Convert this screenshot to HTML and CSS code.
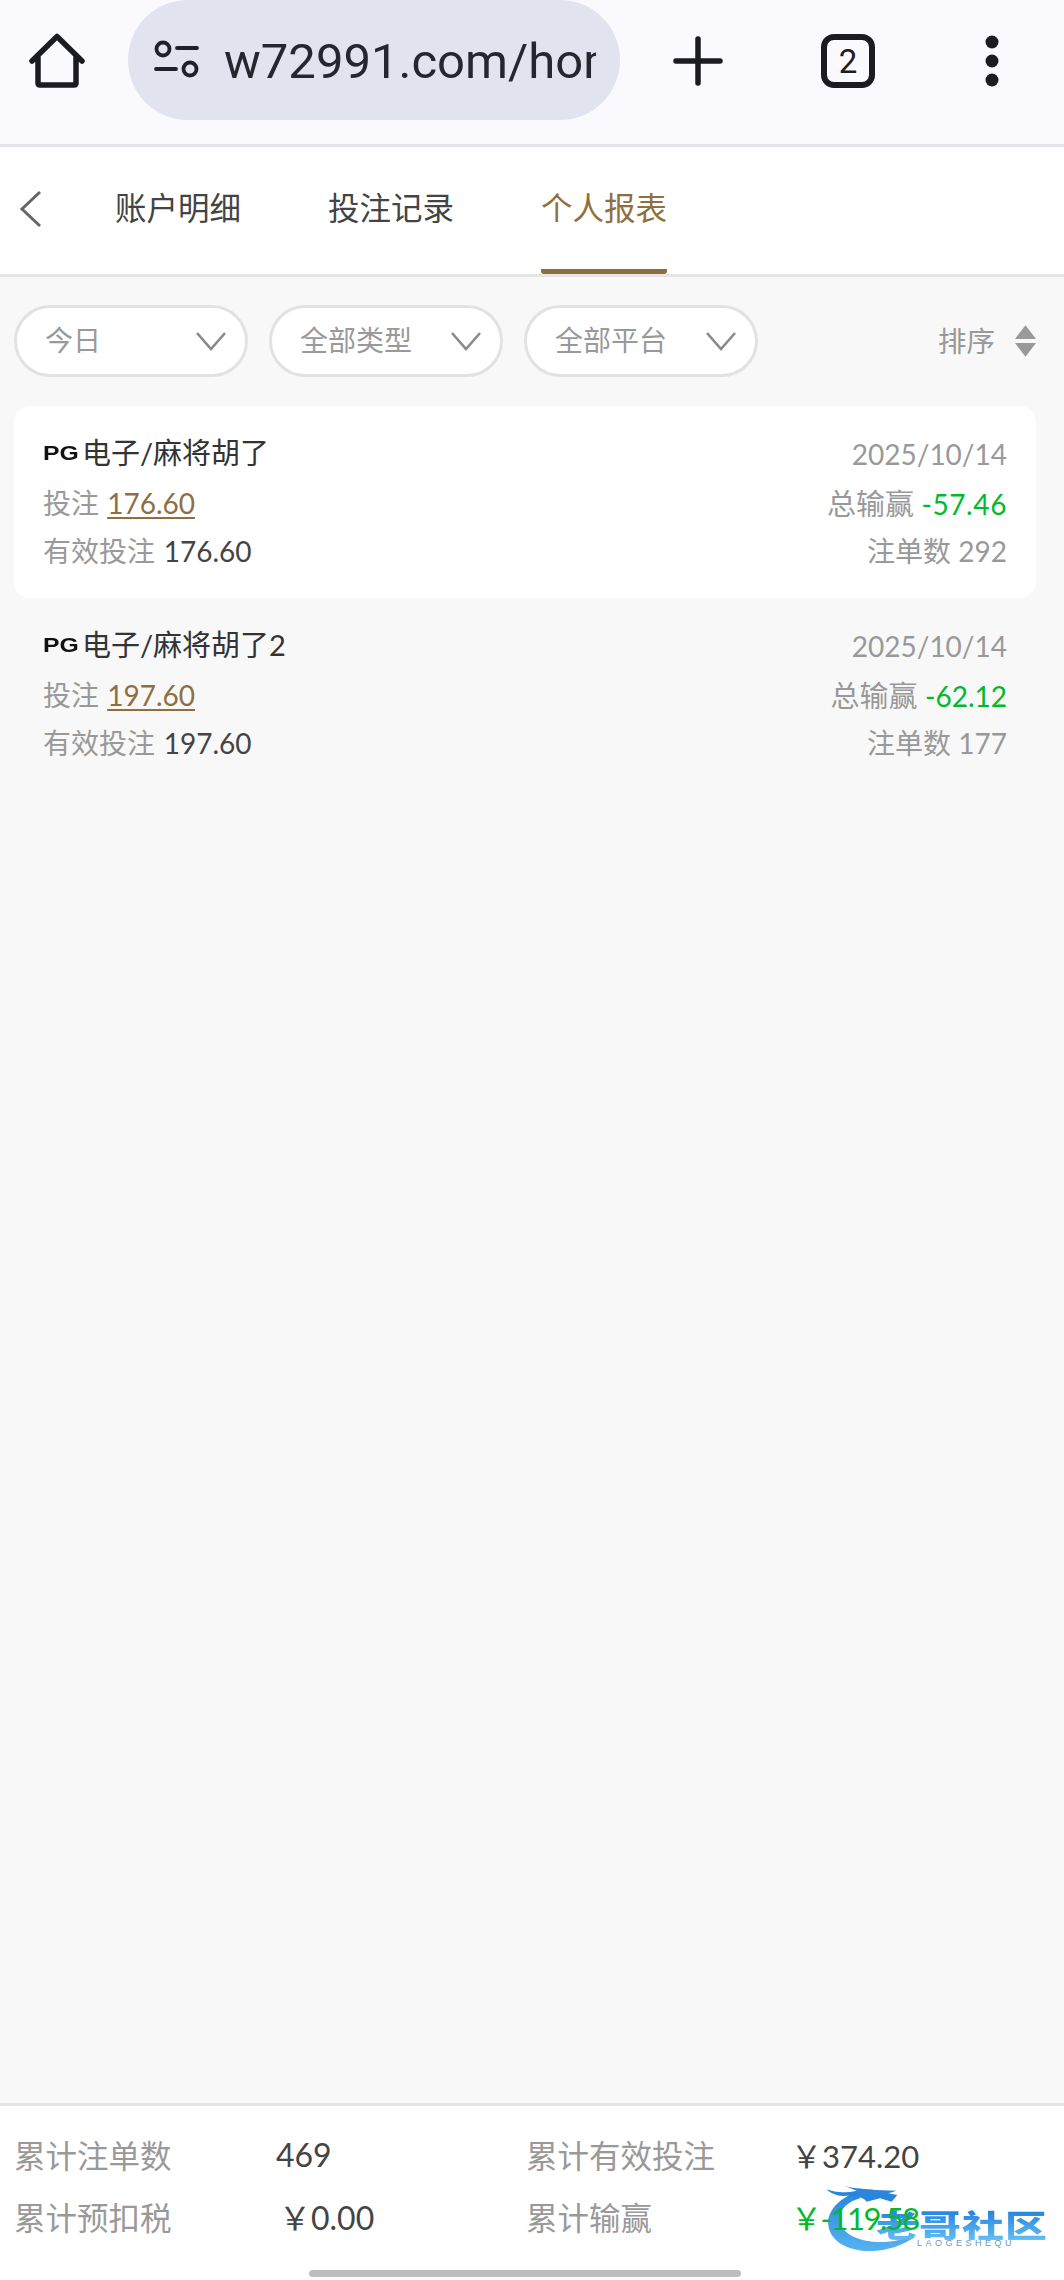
FILE: index.html
```html
<!DOCTYPE html>
<html lang="zh">
<head>
<meta charset="utf-8">
<title>个人报表</title>
<link rel="stylesheet" href="styles.css">
</head>
<body>
<div class="page">
  <header class="browser">
    <svg class="home" viewBox="0 0 56 56"><path d="M3 28 L28 3.500 L53 28 M9 22 V50 Q9 52 11 52 H45 Q47 52 47 50 V22" fill="none" stroke="#1b1c22" stroke-width="5.500" stroke-linecap="round" stroke-linejoin="round"/></svg>
    <div class="url">
      <svg class="tune" viewBox="0 0 46 44"><circle cx="10" cy="12" r="6.500" fill="none" stroke="#1f2028" stroke-width="3.800"/><path d="M24 11H44M3 32H23" stroke="#1f2028" stroke-width="3.800" stroke-linecap="round"/><circle cx="37" cy="32" r="6.500" fill="none" stroke="#1f2028" stroke-width="3.800"/></svg>
      <span class="url-text">w72991.com/home</span>
    </div>
    <svg class="plus" viewBox="0 0 50 50"><path d="M25 3V47M3 25H47" stroke="#1b1c22" stroke-width="5.500" stroke-linecap="round"/></svg>
    <div class="tabs-count">2</div>
    <svg class="more" viewBox="0 0 16 52"><circle cx="8" cy="7" r="6.500" fill="#1b1c22"/><circle cx="8" cy="26" r="6.500" fill="#1b1c22"/><circle cx="8" cy="45" r="6.500" fill="#1b1c22"/></svg>
  </header>

  <nav class="tabbar">
    <svg class="back" viewBox="0 0 25 38"><path d="M22 2 L4 19 L22 36" fill="none" stroke="#666" stroke-width="3"/></svg>
    <a class="tab">账户明细</a>
    <a class="tab">投注记录</a>
    <a class="tab active">个人报表</a>
  </nav>

  <main class="content">
    <div class="filters">
      <div class="pill"><span>今日</span><svg class="chev" viewBox="0 0 32 20"><path d="M2 2 L16 18 L30 2" fill="none" stroke="#8a8a8a" stroke-width="2.600"/></svg></div>
      <div class="pill"><span>全部类型</span><svg class="chev" viewBox="0 0 32 20"><path d="M2 2 L16 18 L30 2" fill="none" stroke="#8a8a8a" stroke-width="2.600"/></svg></div>
      <div class="pill"><span>全部平台</span><svg class="chev" viewBox="0 0 32 20"><path d="M2 2 L16 18 L30 2" fill="none" stroke="#8a8a8a" stroke-width="2.600"/></svg></div>
      <div class="sort"><span>排序</span><svg class="sort-icon" viewBox="0 0 20 30"><path d="M10 0 L20 13 H0Z M0 17 H20 L10 30Z" fill="#999"/></svg></div>
    </div>

    <article class="record first">
      <div class="row">
        <div class="game"><span class="pg">PG</span><span>电子/麻将胡了</span></div>
        <span class="muted">2025/10/14</span>
      </div>
      <div class="row">
        <div><span class="muted">投注 </span><span class="bet">176.60</span></div>
        <div><span class="muted wide-label">总输赢 </span><span class="win loose">-57.46</span></div>
      </div>
      <div class="row">
        <div><span class="muted">有效投注 </span><span class="dark">176.60</span></div>
        <span class="muted">注单数 292</span>
      </div>
    </article>

    <article class="record">
      <div class="row">
        <div class="game"><span class="pg">PG</span><span>电子/麻将胡了2</span></div>
        <span class="muted">2025/10/14</span>
      </div>
      <div class="row">
        <div><span class="muted">投注 </span><span class="bet">197.60</span></div>
        <div><span class="muted wide-label">总输赢 </span><span class="win">-62.12</span></div>
      </div>
      <div class="row">
        <div><span class="muted">有效投注 </span><span class="dark">197.60</span></div>
        <span class="muted">注单数 177</span>
      </div>
    </article>
  </main>

  <footer class="totals">
    <div class="watermark">
      <svg class="dragon" viewBox="0 0 852 360"><defs><linearGradient id="dg" x1="0" y1="0" x2="0" y2="1"><stop offset="0" stop-color="#2a86dc"/><stop offset="1" stop-color="#55b2f0"/></linearGradient></defs><path d="M235 95 C170 115 140 160 145 195 C150 250 220 280 290 272 C340 268 390 245 410 225 C370 240 320 250 280 245 C220 240 180 215 180 175 C180 145 205 125 240 115Z" fill="url(#dg)"/><path d="M140 88 C170 100 200 98 230 92 L195 78 C225 88 260 85 285 90 L350 92 L325 100 L352 105 L335 125 L300 115 L260 125 C250 110 220 105 190 108 C170 108 150 100 140 88Z" fill="#2a86dc"/></svg>
      <span class="wm-title">老哥社区</span>
      <span class="wm-sub">LAOGESHEQU</span>
    </div>
    <div class="total-grid">
      <span class="label">累计注单数</span><span class="val v1">469</span>
      <span class="label">累计有效投注</span><span class="val v2">￥374.20</span>
      <span class="label">累计预扣税</span><span class="val v3">￥0.00</span>
      <span class="label">累计输赢</span><span class="val v2 green">￥-119.58</span>
    </div>
    <div class="home-indicator"></div>
  </footer>
</div>
</body>
</html>
```
FILE: styles.css
```css
* { box-sizing: border-box; }
html, body { margin: 0; padding: 0; }
body { font-family: "Lato", "Noto Sans CJK SC", sans-serif; }
.page { width: 1064px; height: 2280px; display: flex; flex-direction: column; background: #f8f8f8; overflow: hidden; }

.browser { height: 147px; flex: none; background: #f9f9fe; border-bottom: 3px solid #e3e4ea; display: flex; align-items: flex-start; position: relative; }
.home { width: 56px; height: 56px; margin: 33px 0 0 29px; flex: none; }
.url { width: 492px; height: 120px; margin-left: 43px; flex: none; background: #e1e3ef; border-radius: 60px; display: flex; align-items: center; padding-left: 25px; }
.tune { width: 46px; height: 44px; flex: none; margin-top: -2px; }
.url-text { margin-left: 25px; width: 372px; overflow: hidden; white-space: nowrap; font-family: "Roboto", sans-serif; font-size: 49px; color: #25262e; margin-top: 2px; }
.plus { width: 50px; height: 50px; margin: 36px 0 0 53px; flex: none; }
.tabs-count { width: 54px; height: 54px; margin: 34px 0 0 98px; flex: none; border: 6px solid #1b1c22; border-radius: 13px; display: flex; align-items: center; justify-content: center; font-family: "Roboto", sans-serif; font-size: 33px; color: #1b1c22; }
.more { width: 16px; height: 52px; margin: 35px 0 0 109px; flex: none; }

.tabbar { height: 130px; flex: none; background: #fff; border-bottom: 3px solid #e6e6e6; display: flex; align-items: stretch; position: relative; padding-left: 115px; gap: 87px; }
.back { position: absolute; left: 18px; top: 43px; width: 25px; height: 38px; }
.tab { font-size: 31.500px; line-height: 122px; color: #444; position: relative; height: 127px; white-space: nowrap; }
.tab.active { color: #8f6f3f; border-bottom: 5px solid #8c6d3f; border-radius: 0 0 3px 3px; }

.content { flex: 1; min-height: 0; padding: 28px 14px 0; }
.filters { display: flex; align-items: center; height: 72px; margin: 0 14px 29px 0; gap: 21px; }
.pill { width: 234px; height: 72px; border: 3px solid #e2e2e2; border-radius: 36px; background: #fff; display: flex; align-items: center; justify-content: space-between; padding: 0 18px 0 28px; font-size: 28px; line-height: 34px; color: #999; }
.pill span { margin-top: -3px; }
.chev { width: 32px; height: 20px; flex: none; }
.sort { margin-left: auto; display: flex; align-items: center; font-size: 28.500px; color: #999; gap: 20px; }
.sort span { margin-top: -3px; }
.sort-icon { width: 21px; height: 32px; }

.record { width: 1022px; height: 192px; padding: 24px 29px 0; display: flex; flex-direction: column; font-size: 28px; }
.record.first { background: #fff; border-radius: 16px; }
.row { display: flex; justify-content: space-between; align-items: center; height: 48px; white-space: nowrap; }
.game { display: flex; align-items: center; color: #333; margin-top: -6px; font-size: 29px; }
.pg { font-family: "Liberation Sans", sans-serif; font-weight: 700; font-size: 21px; width: 39px; margin-top: 3px; color: #111; transform: scaleX(1.18); transform-origin: left center; }
.muted { color: #999; }
.wide-label { font-size: 29px; }
.bet { color: #8f6f3f; margin-left: 1px; text-decoration: underline; text-underline-offset: 3px; }
.win { color: #02b92c; }
.loose { letter-spacing: 0.600px; }
.dark { color: #444; margin-left: 1.500px; }

.totals { height: 177px; flex: none; background: #fff; border-top: 3px solid #e6e6e6; position: relative; padding: 17px 14px 0; }
.total-grid { position: relative; display: grid; grid-template-columns: 262px 250px 265px 1fr; grid-template-rows: 62px 62px; align-items: center; font-size: 31px; }
.label { color: #999; white-space: nowrap; font-size: 31.500px; }
.val { color: #444; white-space: nowrap; }
.v1 { font-size: 32px; }
.v3 { padding-left: 3px; font-size: 32px; }
.green { color: #02b92c; letter-spacing: -1.500px; }

.watermark { position: absolute; left: 780px; top: 54px; width: 284px; height: 120px; }
.dragon { position: absolute; left: 0; top: 0; width: 284px; height: 120px; }
.wm-title { position: absolute; left: 96px; top: 42px; font-family: "Noto Sans CJK SC", sans-serif; font-weight: 900; font-size: 42px; line-height: 44px; letter-spacing: 1px; white-space: nowrap; transform: scaleY(0.72); background: linear-gradient(#1f7edb, #63bdf4); -webkit-background-clip: text; background-clip: text; color: transparent; }
.wm-sub { position: absolute; left: 137px; top: 79px; font-family: "Liberation Sans", sans-serif; font-size: 9px; line-height: 9px; letter-spacing: 3.500px; color: #6d95c4; white-space: nowrap; }

.home-indicator { position: absolute; left: 309px; top: 164px; width: 432px; height: 7px; border-radius: 4px; background: #bdbdbd; }
```
